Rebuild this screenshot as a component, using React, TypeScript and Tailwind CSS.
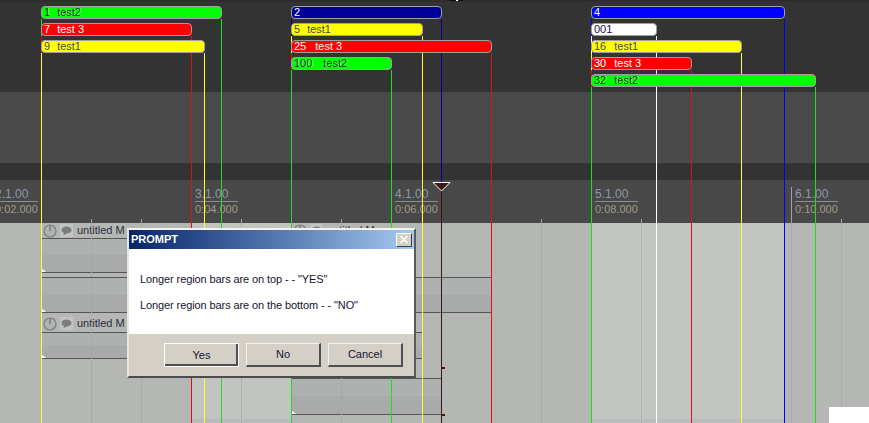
import { Fragment } from 'react'

type Region = { num: string; label?: string; start: number; end: number; row: number; bar: string; line: string; text: string; gap: string }

const shadow = '[text-shadow:1px_0_0_rgba(255,255,255,0.55)]'

const regions: Region[] = [
  { num: '1', label: 'test2', start: 41, end: 221, row: 0, bar: 'bg-[#00ff00]', line: '#22dd22', text: `text-[#0a3a0a] ${shadow}`, gap: 'gap-[7px]' },
  { num: '7', label: 'test 3', start: 41, end: 191, row: 1, bar: 'bg-[#ff0000]', line: '#dd1111', text: 'text-white', gap: 'gap-[7px]' },
  { num: '9', label: 'test1', start: 41, end: 204, row: 2, bar: 'bg-[#ffff00]', line: '#ffff22', text: `text-[#4a4a10] ${shadow}`, gap: 'gap-[7px]' },
  { num: '2', start: 291, end: 441, row: 0, bar: 'bg-[#000099]', line: '#000099', text: 'text-white', gap: 'gap-[7px]' },
  { num: '5', label: 'test1', start: 291, end: 422, row: 1, bar: 'bg-[#ffff00]', line: '#ffff22', text: `text-[#4a4a10] ${shadow}`, gap: 'gap-[7px]' },
  { num: '25', label: 'test 3', start: 291, end: 491, row: 2, bar: 'bg-[#ff0000]', line: '#dd1111', text: 'text-white', gap: 'gap-[9px]' },
  { num: '100', label: 'test2', start: 291, end: 391, row: 3, bar: 'bg-[#00ff00]', line: '#22dd22', text: `text-[#0a3a0a] ${shadow}`, gap: 'gap-[11px]' },
  { num: '4', start: 591, end: 784, row: 0, bar: 'bg-[#0000ff]', line: '#0000ff', text: 'text-white', gap: 'gap-[7px]' },
  { num: '001', start: 591, end: 656, row: 1, bar: 'bg-white', line: '#ffffff', text: 'text-[#101050]', gap: 'gap-[7px]' },
  { num: '16', label: 'test1', start: 591, end: 741, row: 2, bar: 'bg-[#ffff00]', line: '#ffff22', text: `text-[#4a4a10] ${shadow}`, gap: 'gap-[8px]' },
  { num: '30', label: 'test 3', start: 591, end: 691, row: 3, bar: 'bg-[#ff0000]', line: '#dd1111', text: 'text-white', gap: 'gap-[8px]' },
  { num: '32', label: 'test2', start: 591, end: 815, row: 4, bar: 'bg-[#00ff00]', line: '#22dd22', text: `text-[#0a3a0a] ${shadow}`, gap: 'gap-[8px]' },
]

const rulerMarks = [
  { x: -5, bar: '2.1.00', time: '0:02.000' },
  { x: 195, bar: '3.1.00', time: '0:04.000' },
  { x: 395, bar: '4.1.00', time: '0:06.000' },
  { x: 595, bar: '5.1.00', time: '0:08.000' },
  { x: 795, bar: '6.1.00', time: '0:10.000' },
]

const beats = [91, 141, 241, 341, 541, 641, 791, 841]

// media items, top is relative to the arrange view
const items = [
  { left: 41, width: 150, top: 15, height: 34 },
  { left: 41, width: 450, top: 54, height: 35 },
  { left: 41, width: 150, top: 109, height: 26 },
  { left: 291, width: 132, top: 109, height: 26 },
  { left: 291, width: 150, top: 155, height: 36 },
]

const trackHeaders = [
  { left: 41, top: 0, name: 'untitled M' },
  { left: 41, top: 93, name: 'untitled M' },
  { left: 291, top: 0, name: 'untitled M' },
]

function Knob() {
  return (
    <svg width="14" height="14" viewBox="0 0 14 14">
      <circle cx="7" cy="7" r="6" fill="#b0b3b1" stroke="#7c7f7e" strokeWidth="1.2" />
      <path d="M7 1.5V7" stroke="#6f7271" strokeWidth="1.2" />
    </svg>
  )
}

function Bubble() {
  return (
    <div className="w-[13px] h-[13px] bg-[#c2c4c2] flex items-center justify-center">
      <svg width="11" height="10" viewBox="0 0 11 10">
        <ellipse cx="5.5" cy="4" rx="5" ry="3.6" fill="#7a7d7c" />
        <path d="M3 6.5 L2.5 9.5 L6 7z" fill="#7a7d7c" />
      </svg>
    </div>
  )
}

function RegionBar({ r }: { r: Region }) {
  return (
    <div
      className={`absolute h-[13px] rounded-[4px] border border-[#a0a0a0] flex items-center pl-[2px] text-[11px] leading-none overflow-hidden whitespace-nowrap ${r.gap} ${r.bar} ${r.text}`}
      style={{ left: r.start, width: r.end - r.start + 1, top: 6 + r.row * 17 }}
    >
      <span>{r.num}</span>
      {r.label && <span>{r.label}</span>}
    </div>
  )
}

function DialogButton({ label, primary }: { label: string; primary?: boolean }) {
  return (
    <button
      className={`w-[75px] h-[24px] bg-[#d4d0c8] text-[11px] text-[#14142e] ${
        primary
          ? 'border border-white shadow-[inset_-2px_-2px_0_#505050]'
          : 'border-t border-l border-b-2 border-r-2 border-t-[#f4f2ee] border-l-[#f4f2ee] border-b-[#505050] border-r-[#505050]'
      }`}
    >
      {label}
    </button>
  )
}

function PromptDialog() {
  return (
    <div className="absolute left-[127px] top-[228px] w-[289px] h-[150px] flex flex-col bg-[#d4d0c8] border-t-2 border-l-2 border-t-[#f4f2ee] border-l-[#e8e6e0] border-b-2 border-r-2 border-b-[#4c4c4c] border-r-[#5a5a5a]">
      <div className="h-[19px] flex items-center justify-between px-[2px] bg-gradient-to-r from-[#0a246a] to-[#a6caf0]">
        <span className="text-[11px] font-bold text-white">PROMPT</span>
        <div className="w-[16px] h-[14px] bg-[#d4d0c8] border-t border-l border-t-white border-l-white border-b border-r border-b-[#404040] border-r-[#404040] flex items-center justify-center">
          <svg width="10" height="9" viewBox="0 0 10 9">
            <path d="M1.5 1 L8.5 8 M8.5 1 L1.5 8" stroke="#ffffff" strokeWidth="1.6" />
          </svg>
        </div>
      </div>
      <div className="h-[85px] bg-white pl-[11px] pt-[24px] flex flex-col gap-[13px] text-[11px] leading-[13px] tracking-[-0.1px] text-[#14142e]">
        <p>{'Longer region bars are on top - - "YES"'}</p>
        <p>{'Longer region bars are on the bottom - - "NO"'}</p>
      </div>
      <div className="flex-1 flex items-start gap-[7px] pl-[35px] pt-[9px]">
        <DialogButton label="Yes" primary />
        <DialogButton label="No" />
        <DialogButton label="Cancel" />
      </div>
    </div>
  )
}

export default function App() {
  return (
    <div className="relative w-[869px] h-[423px] overflow-hidden flex flex-col bg-[#333333] font-['Liberation_Sans',sans-serif]">
      <div className="h-[2px] bg-[#2d2d2d]" />
      <div className="h-[90px] bg-[#333333]" />
      <div className="h-[71px] bg-[#4a4a4a]" />
      <div className="h-[17px] bg-[#333333]" />

      {/* ruler */}
      <div className="relative h-[43px] bg-[#484848]">
        {rulerMarks.map((m) => (
          <div key={m.bar} className="absolute top-[8px] w-[43px]" style={{ left: m.x }}>
            <div className="text-[12px] leading-[12px] text-[#8b98a6] border-b border-[#8e8e8e] pb-px whitespace-nowrap">{m.bar}</div>
            <div className="text-[11px] leading-[14px] text-[#a09a88] whitespace-nowrap">{m.time}</div>
          </div>
        ))}
        {beats.map((x) => (
          <div key={x} className="absolute bottom-0 w-px h-[4px] bg-[#a4a4a4]" style={{ left: x }} />
        ))}
        <div className="absolute left-[791px] top-[7px] bottom-0 w-px bg-[#a4a4a4]" />
      </div>

      {/* arrange view */}
      <div className="relative flex-1 flex bg-[#b5b7b5]">
        <div className="w-[191px]" />
        <div className="w-[100px] bg-[#c2c4c2] border-b-4 border-[#b9bcbc]" />
        <div className="w-[300px]" />
        <div className="w-[193px] bg-[#c3c5c3] border-b-4 border-[#b9bdbe]" />

        {items.map((it) => (
          <div
            key={`${it.left}-${it.top}`}
            className="absolute border-y border-[#555555] bg-[linear-gradient(#adb1af_50%,#a8abaa_50%)]"
            style={{ left: it.left, width: it.width, top: it.top, height: it.height + 1 }}
          >
            <div className="absolute left-0 bottom-0 w-0 h-0 border-l-[5px] border-t-[4px] border-l-white border-t-transparent" />
          </div>
        ))}

        {trackHeaders.map((h) => (
          <div
            key={`${h.left}-${h.top}`}
            className="absolute h-[15px] flex items-center gap-[3px] pl-[2px] text-[11px] text-[#2c2c3a] whitespace-nowrap"
            style={{ left: h.left, top: h.top }}
          >
            <Knob />
            <Bubble />
            <span className="ml-[1px]">{h.name}</span>
          </div>
        ))}

        {beats.map((x) => (
          <div key={x} className="absolute top-0 bottom-0 border-l border-dotted border-[#a0a2a0]" style={{ left: x }} />
        ))}

        <div className="absolute left-[441px] top-[144px] w-[4px] h-[2px] bg-[#5a1010]" />
        <div className="absolute left-[441px] top-[191px] w-[4px] h-[2px] bg-[#5a1010]" />
      </div>

      <div className="absolute left-[449px] top-0 w-[14px] h-px bg-[#111111]" />
      <div className="absolute left-[456px] top-0 w-[2px] h-px bg-white" />

      {/* region edges run the whole height, each bar starts its line */}
      {regions.map((r) => (
        <Fragment key={r.num}>
          <div
            className="absolute bottom-0 w-px"
            style={{ left: r.start, top: 19 + r.row * 17, backgroundColor: r.line }}
          />
          <div
            className="absolute bottom-0 w-px"
            style={{ left: r.end, top: 19 + r.row * 17, backgroundColor: r.line }}
          />
        </Fragment>
      ))}
      {regions.map((r) => (
        <RegionBar key={r.num} r={r} />
      ))}

      {/* playhead */}
      <div className="absolute left-[441px] top-[189px] bottom-0 w-px bg-[#3c1414]" />
      <svg className="absolute left-[432px] top-[181px]" width="19" height="11" viewBox="0 0 19 11">
        <path d="M1 1.5 H18 L9.5 10z" fill="#3c1818" stroke="#ffffff" strokeWidth="1" />
      </svg>

      <PromptDialog />

      <div className="absolute left-[829px] top-[407px] w-[40px] h-[16px] bg-white" />
    </div>
  )
}
